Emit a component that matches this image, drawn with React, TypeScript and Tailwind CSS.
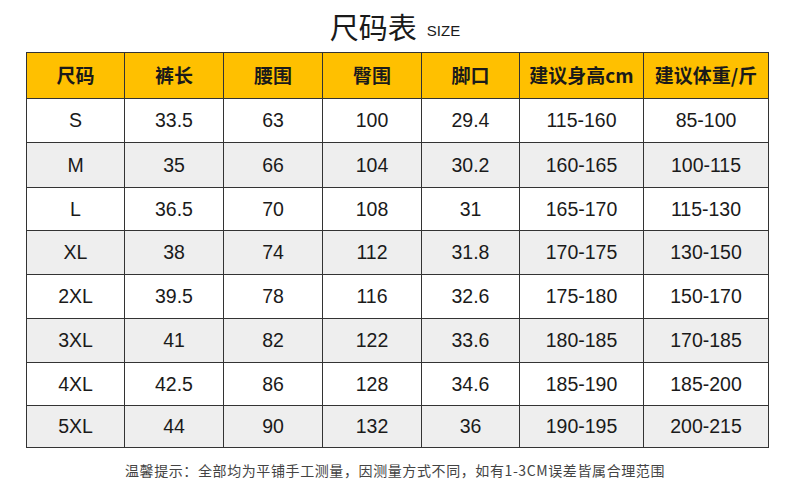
import React from 'react'

const headers = ['尺码', '裤长', '腰围', '臀围', '脚口', '建议身高cm', '建议体重/斤']

const rows: string[][] = [
  ['S', '33.5', '63', '100', '29.4', '115-160', '85-100'],
  ['M', '35', '66', '104', '30.2', '160-165', '100-115'],
  ['L', '36.5', '70', '108', '31', '165-170', '115-130'],
  ['XL', '38', '74', '112', '31.8', '170-175', '130-150'],
  ['2XL', '39.5', '78', '116', '32.6', '175-180', '150-170'],
  ['3XL', '41', '82', '122', '33.6', '180-185', '170-185'],
  ['4XL', '42.5', '86', '128', '34.6', '185-190', '185-200'],
  ['5XL', '44', '90', '132', '36', '190-195', '200-215'],
]

// measured from the picture, px
const rowHeights = ['h-[44px]', 'h-[45px]', 'h-[43px]', 'h-[44px]', 'h-[44px]', 'h-[44px]', 'h-[43px]', 'h-[42px]']

const cjk = { fontFamily: '"Liberation Sans", "Noto Sans CJK SC", sans-serif' }

export default function App() {
  return (
    <div className="w-[790px] h-[500px] bg-white text-[#1a1a1a] overflow-hidden" style={cjk}>
      <div className="h-[52px] flex items-center justify-center gap-[10px] pt-[1px]">
        <span className="text-[29px] leading-none font-normal" style={{ fontFamily: '"Noto Sans CJK SC", sans-serif' }}>
          尺码表
        </span>
        <span className="text-[15px] leading-none mt-[8px]">SIZE</span>
      </div>

      <div className="ml-[26px] w-[743px] border-l border-t border-[#333]">
        <div className="grid grid-cols-[98px_99px_99px_99px_98px_124px_125px] bg-[#FFC000]">
          {headers.map((h) => (
            <div
              key={h}
              className="h-[46px] border-r border-b border-[#333] flex items-center justify-center text-[19px] font-bold"
              style={{ fontFamily: '"Noto Sans CJK SC", sans-serif' }}
            >
              {h}
            </div>
          ))}
        </div>
        {rows.map((row, i) => (
          <div
            key={row[0]}
            className={`grid grid-cols-[98px_99px_99px_99px_98px_124px_125px] ${i % 2 === 1 ? 'bg-[#EEEEEE]' : 'bg-white'}`}
          >
            {row.map((cell, j) => (
              <div
                key={j}
                className={`${rowHeights[i]} border-r border-b border-[#333] flex items-center justify-center text-[19.5px] pt-[1px]`}
              >
                {cell}
              </div>
            ))}
          </div>
        ))}
      </div>

      <div className="mt-[12px] text-center text-[14px] tracking-[0.6px] text-[#444]" style={{ fontFamily: '"Noto Sans CJK SC", sans-serif' }}>
        温馨提示：全部均为平铺手工测量，因测量方式不同，如有1-3CM误差皆属合理范围
      </div>
    </div>
  )
}
